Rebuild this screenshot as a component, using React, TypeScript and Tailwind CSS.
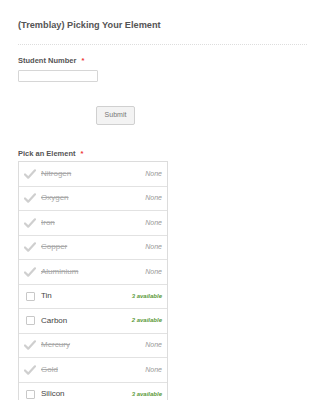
import React from "react";

const items: { name: string; avail: string | null }[] = [
  { name: "Nitrogen", avail: null },
  { name: "Oxygen", avail: null },
  { name: "Iron", avail: null },
  { name: "Copper", avail: null },
  { name: "Aluminium", avail: null },
  { name: "Tin", avail: "3 available" },
  { name: "Carbon", avail: "2 available" },
  { name: "Mercury", avail: null },
  { name: "Gold", avail: null },
  { name: "Silicon", avail: "3 available" },
];

function Check() {
  return (
    <svg width="12" height="10" viewBox="0 0 13 11">
      <path d="M1 6 L4.5 9.5 L12 1.5" fill="none" stroke="#cfcfcf" strokeWidth="2.4" strokeLinecap="round" strokeLinejoin="round" />
    </svg>
  );
}

export default function App() {
  return (
    <div className="w-[325px] h-[400px] overflow-hidden bg-white" style={{ fontFamily: '"Liberation Sans", Arial, sans-serif' }}>
      <div className="px-[18px] pt-[20px]">
        <h1 className="text-[9.2px] leading-[11px] font-bold text-[#555]">(Tremblay) Picking Your Element</h1>
        <div className="mt-[13px] border-t border-dotted border-[#ddd] w-[289px]" />
        <div className="mt-[11px] text-[7.5px] leading-[10px] font-bold text-[#555]">
          Student Number <span className="text-[#e33] ml-[3px]">*</span>
        </div>
        <div className="mt-[4px] w-[80px] h-[12px] border border-[#d6d6d6] rounded-[1px]" />
        <div className="mt-[24px] ml-[78px] w-[39px] h-[19px] bg-[#f3f3f3] border border-[#d0d0d0] rounded-[2px] flex items-center justify-center text-[7px] text-[#777]">
          Submit
        </div>
        <div className="mt-[24px] text-[7.5px] leading-[10px] font-bold text-[#555]">
          Pick an Element <span className="text-[#e33] ml-[3px]">*</span>
        </div>
        <div className="mt-[2px] w-[150px] border border-[#dcdcdc]">
          {items.map((it) => (
            <div key={it.name} className="h-[24.5px] border-b border-[#e2e2e2] flex items-center pl-[5px] pr-[5px]">
              <div className="w-[12px] flex items-center justify-center">
                {it.avail ? (
                  <div className="w-[9px] h-[9px] border border-[#c8c8c8] rounded-[1px] bg-white" />
                ) : (
                  <Check />
                )}
              </div>
              <span
                className={
                  "ml-[5px] text-[8px] " +
                  (it.avail ? "text-[#444]" : "text-[#aaa] line-through")
                }
              >
                {it.name}
              </span>
              <span
                className={
                  "ml-auto italic " +
                  (it.avail ? "text-[6px] text-[#5c9a3a] font-bold" : "text-[7px] text-[#999]")
                }
              >
                {it.avail ?? "None"}
              </span>
            </div>
          ))}
        </div>
      </div>
    </div>
  );
}
